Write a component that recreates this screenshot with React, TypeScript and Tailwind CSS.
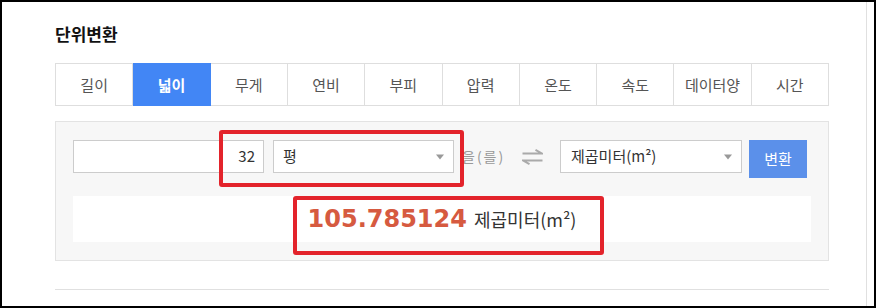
import React from "react";

const tabs = ["길이", "넓이", "무게", "연비", "부피", "압력", "온도", "속도", "데이터양", "시간"];

const kr = { fontFamily: '"Noto Sans CJK KR", "Noto Sans", sans-serif' };

const Caret = () => (
  <span className="absolute right-[9px] top-1/2 -translate-y-1/2 h-0 w-0 border-x-[4px] border-t-[5px] border-x-transparent border-t-[#999]" />
);

const App = () => {
  return (
    <div
      className="relative h-[308px] w-[876px] overflow-hidden border-2 border-black bg-white text-[#333]"
      style={kr}
    >
      <div className="h-full w-[865px] border-r border-[#e0e0e0]">
        <div className="ml-[53px] w-[774px]">
          {/* title */}
          <h1 className="pt-[20px] text-[17px] font-bold leading-[24px] text-[#111]">단위변환</h1>

          {/* tabs */}
          <div className="mt-[17px] grid h-[43px] grid-cols-10 border-l border-[#dedede]">
            {tabs.map((t) => (
              <div
                key={t}
                className={`flex items-center justify-center border-y border-r text-[15px] leading-none ${
                  t === "넓이"
                    ? "border-[#4286f5] bg-[#4286f5] font-bold text-white"
                    : "border-[#dedede] text-[#555]"
                }`}
              >
                {t}
              </div>
            ))}
          </div>

          {/* converter panel */}
          <div className="mt-[15px] border border-[#e3e3e3] bg-[#f7f7f7] px-[17px] py-[18px]">
            <div className="flex h-[38px] items-start">
              <div className="flex h-[33px] w-[191px] items-center justify-end border border-[#ccc] bg-white pr-[8px] text-[15px]">
                32
              </div>
              <div className="relative ml-[9px] flex h-[33px] w-[181px] items-center border border-[#ccc] bg-white pl-[9px] text-[15px]">
                평
                <Caret />
              </div>
              <div className="ml-[8px] flex h-[33px] w-[41px] items-center whitespace-nowrap text-[14px] tracking-[2px] text-[#999]">
                을(를)
              </div>
              <div className="ml-[19px] flex h-[33px] items-center">
                <svg width="21" height="18" viewBox="0 0 21 18" fill="none" stroke="#aaa" strokeWidth="2">
                  <path d="M0.5 5.5H20L13.5 1.8" />
                  <path d="M20.5 12.5H1L7.5 16.2" />
                </svg>
              </div>
              <div className="relative ml-[17px] flex h-[33px] w-[182px] items-center border border-[#ccc] bg-white pl-[10px] text-[15px]">
                제곱미터(m²)
                <Caret />
              </div>
              <button className="ml-[7px] flex h-[38px] w-[58px] items-center justify-center bg-[#5b90ea] text-[15px] text-white">
                변환
              </button>
            </div>

            <div className="mt-[18px] flex h-[46px] items-center justify-center bg-white">
              <span
                className="text-[24px] font-bold leading-none text-[#d65a40]"
                style={{ fontFamily: '"DejaVu Sans", Verdana, sans-serif' }}
              >
                105.785124
              </span>
              <span className="ml-[7px] text-[18px] leading-none text-[#333]">제곱미터(m²)</span>
            </div>
          </div>

          <div className="mt-[28px] h-px bg-[#e0e0e0]" />
        </div>
      </div>

      {/* red annotation boxes */}
      <div className="absolute left-[217px] top-[128px] h-[57px] w-[245px] rounded-[3px] border-4 border-[#e3232b]" />
      <div className="absolute left-[291px] top-[194px] h-[59px] w-[311px] rounded-[3px] border-4 border-[#e3232b]" />
    </div>
  );
};

export default App;
